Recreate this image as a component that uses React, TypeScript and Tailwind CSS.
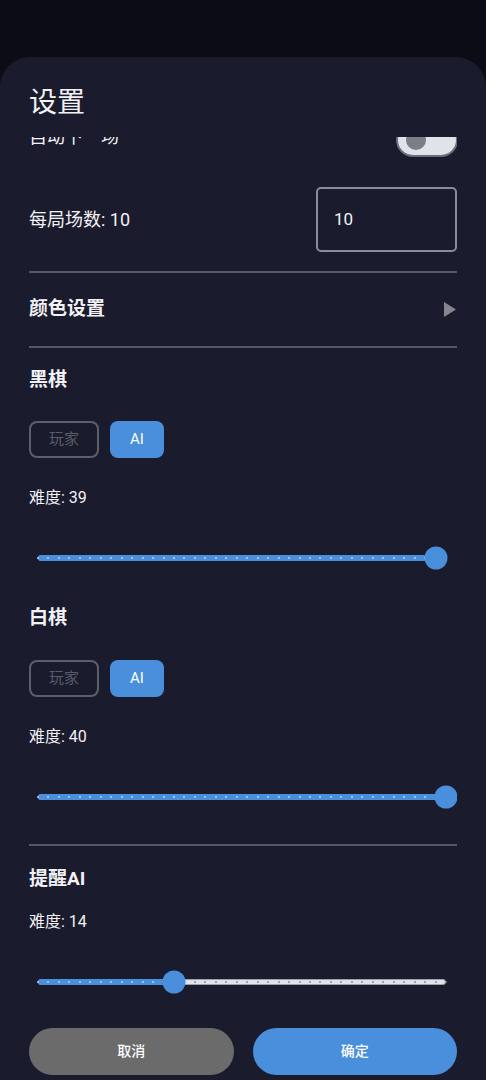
import React from "react";

const font = { fontFamily: 'Roboto, "Noto Sans CJK SC", sans-serif' };

function Slider({ value, min = 1, max = 40 }: { value: number; min?: number; max?: number }) {
  const steps = max - min;
  const pct = ((value - min) / steps) * 100;
  const ticks = Array.from({ length: steps + 1 }, (_, i) => (i / steps) * 100);
  return (
    <div className="pl-[9px] pr-[11px]">
      <div className="relative h-[30px]">
        <div className="absolute inset-x-0 top-1/2 h-[6px] -translate-y-1/2 rounded-full border border-[#9aa0ac] bg-[#e1e4ec]" />
        <div
          className="absolute left-0 top-1/2 h-[6px] -translate-y-1/2 rounded-full bg-[#4a8fdb]"
          style={{ width: `${pct}%` }}
        />
        {ticks.map((t, i) => (
          <div
            key={i}
            className={`absolute top-1/2 h-[2px] w-[2px] -translate-x-1/2 -translate-y-1/2 rounded-full ${
              t <= pct ? "bg-[#b9d3f2]" : "bg-[#8b8f99]"
            }`}
            style={{ left: `${t}%` }}
          />
        ))}
        <div
          className="absolute top-1/2 h-[23px] w-[23px] -translate-x-1/2 -translate-y-1/2 rounded-full bg-[#4a8fdb]"
          style={{ left: `${pct}%` }}
        />
      </div>
    </div>
  );
}

function ModeButtons() {
  return (
    <div className="flex gap-[11px]">
      <div className="flex h-[37px] w-[70px] items-center justify-center rounded-[8px] border-2 border-[#5d5f6c] text-[15px] text-[#5a5c68]">
        玩家
      </div>
      <div className="flex h-[37px] w-[54px] items-center justify-center rounded-[8px] bg-[#4a8fdb] text-[15px] text-white">
        AI
      </div>
    </div>
  );
}

function Divider() {
  return <div className="h-[2px] bg-[#55576a]" />;
}

export default function App() {
  return (
    <div className="flex h-[1080px] flex-col overflow-hidden bg-[#0b0c15] pt-[57px]" style={font}>
      <div className="flex flex-1 flex-col overflow-hidden rounded-t-[30px] bg-[#1a1b2c] px-[29px] text-[#f2f2f6]">
        <h1 className="mt-[28px] h-[36px] text-[28px] leading-[36px] font-normal">设置</h1>

        {/* list is scrolled a little, so the first row is partly hidden */}
        <div className="mt-[16px] h-[868px] overflow-hidden">
          <div className="-mt-[17px] flex h-[40px] items-center justify-between">
            <span className="mb-[7px] text-[18px]">自动下一场</span>
            <div className="relative mr-[-1px] h-[34px] w-[62px] rounded-full border-2 border-[#6c6f79] bg-[#dfe3ea]">
              <div className="absolute left-[8px] top-1/2 h-[20px] w-[20px] -translate-y-1/2 rounded-full bg-[#7b7e86]" />
            </div>
          </div>

          <div className="mt-[27px] flex h-[65px] items-center justify-between">
            <span className="text-[18px]">每局场数: 10</span>
            <div className="flex h-[65px] w-[141px] items-center rounded-[5px] border-2 border-[#8a8c97] pl-[16px] text-[17px]">
              10
            </div>
          </div>

          <div className="mt-[19px]">
            <Divider />
          </div>

          <div className="flex h-[73px] items-center justify-between">
            <span className="text-[19px] font-bold">颜色设置</span>
            <svg width="12" height="15" viewBox="0 0 12 15" className="mr-[1px]">
              <polygon points="0,0 12,7.5 0,15" fill="#85868f" />
            </svg>
          </div>

          <Divider />

          <div className="mt-[20px] text-[19px] leading-[24px] font-bold">黑棋</div>
          <div className="mt-[29px]">
            <ModeButtons />
          </div>
          <div className="mt-[30px] text-[16px] leading-[20px]">难度: 39</div>
          <div className="mt-[35px]">
            <Slider value={39} />
          </div>

          <div className="mt-[33px] text-[19px] leading-[24px] font-bold">白棋</div>
          <div className="mt-[30px]">
            <ModeButtons />
          </div>
          <div className="mt-[30px] text-[16px] leading-[20px]">难度: 40</div>
          <div className="mt-[35px]">
            <Slider value={40} />
          </div>

          <div className="mt-[32px]">
            <Divider />
          </div>

          <div className="mt-[21px] text-[19px] leading-[24px] font-bold">提醒AI</div>
          <div className="mt-[21px] text-[16px] leading-[20px]">难度: 14</div>
          <div className="mt-[35px]">
            <Slider value={14} />
          </div>
        </div>

        <div className="mt-[23px] flex gap-[19px]">
          <button className="flex h-[47px] flex-1 items-center justify-center rounded-full bg-[#6b6b6b] text-[14px] font-medium text-white">
            取消
          </button>
          <button className="flex h-[47px] flex-1 items-center justify-center rounded-full bg-[#4a8fdb] text-[14px] font-medium text-white">
            确定
          </button>
        </div>
      </div>
    </div>
  );
}
